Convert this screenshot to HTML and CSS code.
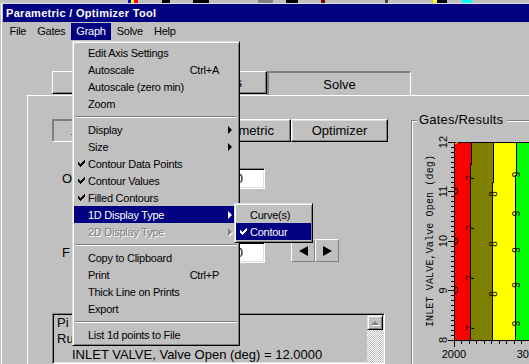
FILE: index.html
```html
<!DOCTYPE html>
<html lang="en">
    <head>
        <meta charset="UTF-8" />
        <title>Parametric / Optimizer Tool</title>
        <link rel="stylesheet" href="styles.css">
    </head>
    <body>
        <div class="window">
            <div class="desk-strip"></div>
            <div class="titlebar">Parametric / Optimizer Tool</div>

            <!-- Menu bar -->
            <div class="menubar">
                <span class="menubar-item">File</span>
                <span class="menubar-item">Gates</span>
                <span class="menubar-item open">Graph</span>
                <span class="menubar-item">Solve</span>
                <span class="menubar-item">Help</span>
            </div>

            <div class="client">
                <!-- Tab strip -->
                <div class="tabs">
                    <div class="tab tab-gates">Gates</div>
                    <div class="tab tab-params">Parameters</div>
                    <div class="tab tab-solve">Solve</div>
                </div>

                <div class="tab-panel">
                    <!-- Left side: mode buttons, fields, results -->
                    <div class="left-col">
                        <div class="mode-row">
                            <div class="btn mode-btn pressed">1D Sweep</div>
                            <div class="btn mode-btn mode-param">Parametric</div>
                            <div class="btn mode-btn">Optimizer</div>
                        </div>

                        <div class="field-row">
                            <span class="field-label">Operating Point</span>
                            <input class="field-input" type="text" value="2000" />
                        </div>

                        <div class="field-row step-row">
                            <span class="field-label">F Value</span>
                            <input class="field-input" type="text" value="2000" />
                            <div class="step-btns">
                                <div class="step-btn"><span class="tri-left"></span></div>
                                <div class="step-btn"><span class="tri-right"></span></div>
                            </div>
                        </div>

                        <div class="results-box">
                            <div class="results-text">
                                <div>Pi Case 1</div>
                                <div>Run 1 of 1</div>
                                <div class="results-indent">INLET VALVE, Valve Open (deg) = 12.0000</div>
                            </div>
                            <div class="scrollbar">
                                <div class="scroll-btn"><span class="tri-up"></span></div>
                                <div class="scroll-track"></div>
                            </div>
                        </div>
                    </div>

                    <!-- Right side: contour plot -->
                    <div class="group-box">
                        <span class="group-label">Gates/Results</span>
                        <svg class="plot" width="158" height="237" viewBox="412 127 158 237">
                            <g shape-rendering="crispEdges">
                                <rect x="455" y="143" width="16" height="197" fill="#ff0000"/>
                                <rect x="471" y="143" width="22" height="197" fill="#808000"/>
                                <rect x="493" y="143" width="23" height="197" fill="#ffff00"/>
                                <rect x="516" y="143" width="54" height="197" fill="#00ff00"/>
                            </g>
                            <g fill="none" stroke="#000" shape-rendering="crispEdges">
                                <!-- contour boundaries -->
                                <path d="M471.5 142V164H470.5V340M493.5 142V182H492.5V340M516.5 142V175H515.5V340"/>
                                <!-- axes -->
                                <path d="M454.5 142V347M454 142.5H570M448 340.5H570"/>
                                <!-- y ticks -->
                                <path d="M448 142.5h6M448 191.5h6M448 241.5h6M448 290.5h6"/>
                                <path d="M451 147.5h3M451 152.5h3M451 157.5h3M451 162.5h3M451 167.5h3M451 172.5h3M451 177.5h3M451 182.5h3M451 187.5h3M451 196.5h3M451 201.5h3M451 206.5h3M451 211.5h3M451 216.5h3M451 221.5h3M451 226.5h3M451 231.5h3M451 236.5h3M451 246.5h3M451 251.5h3M451 256.5h3M451 261.5h3M451 266.5h3M451 271.5h3M451 276.5h3M451 281.5h3M451 286.5h3M451 295.5h3M451 300.5h3M451 305.5h3M451 310.5h3M451 315.5h3M451 320.5h3M451 325.5h3M451 330.5h3M451 335.5h3"/>
                                <!-- x ticks -->
                                <path d="M461.5 341v3M469.5 341v3M476.5 341v3M484.5 341v3M491.5 341v3M499.5 341v3M506.5 341v3M514.5 341v3M521.5 341v3M529.5 341v6M536.5 341v3M544.5 341v3M551.5 341v3M559.5 341v3M566.5 341v3"/>
                            </g>
                            <path d="M455 144l3 -2" stroke="#ffff00" fill="none"/>
                            <path d="M455 188a3 3 0 0 1 0 6M455 238a3 3 0 0 1 0 6M455 287a3 3 0 0 1 0 6" stroke="#000" fill="none"/>

                            <g font-family="Liberation Sans, Arial, sans-serif" font-size="11" text-anchor="middle">
                                <text transform="translate(446.5 142) rotate(-90)">12</text>
                                <text transform="translate(446.5 191.5) rotate(-90)">11</text>
                                <text transform="translate(446.5 241) rotate(-90)">10</text>
                                <text transform="translate(446.5 290.5) rotate(-90)">9</text>
                                <text transform="translate(446.5 340) rotate(-90)">8</text>
                                <text x="454" y="357.5">2000</text>
                                <text x="529" y="357.5">3000</text>
                            </g>
                            <text font-family="Liberation Mono, monospace" font-size="10" letter-spacing="0.15" text-anchor="middle" transform="translate(432.5 241) rotate(-90)">INLET VALVE,Valve Open (deg)</text>

                            <!-- contour level labels -->
                            <g font-family="Liberation Sans, Arial, sans-serif" font-size="10" text-anchor="middle">
                                <text transform="translate(474 178) rotate(-90)">7</text>
                                <text transform="translate(474 228) rotate(-90)">7</text>
                                <text transform="translate(474 278) rotate(-90)">7</text>
                                <text transform="translate(474 328) rotate(-90)">7</text>
                                <text transform="translate(496.5 194) rotate(-90)">8</text>
                                <text transform="translate(496.5 244) rotate(-90)">8</text>
                                <text transform="translate(496.5 294) rotate(-90)">8</text>
                                <text transform="translate(519.5 174.5) rotate(-90)">9</text>
                                <text transform="translate(519.5 213.5) rotate(-90)">9</text>
                                <text transform="translate(519.5 250) rotate(-90)">9</text>
                                <text transform="translate(519.5 285) rotate(-90)">9</text>
                                <text transform="translate(519.5 323.5) rotate(-90)">9</text>
                            </g>
                        </svg>
                    </div>
                </div>
            </div>

            <!-- Graph drop-down menu -->
            <div class="menu graph-menu">
                <div class="menu-item"><span class="check"></span><span class="menu-label">Edit Axis Settings</span></div>
                <div class="menu-item"><span class="check"></span><span class="menu-label">Autoscale</span><span class="shortcut">Ctrl+A</span></div>
                <div class="menu-item"><span class="check"></span><span class="menu-label">Autoscale (zero min)</span></div>
                <div class="menu-item"><span class="check"></span><span class="menu-label">Zoom</span></div>
                <div class="menu-sep"></div>
                <div class="menu-item"><span class="check"></span><span class="menu-label">Display</span><span class="arrow"></span></div>
                <div class="menu-item"><span class="check"></span><span class="menu-label">Size</span><span class="arrow"></span></div>
                <div class="menu-item"><span class="check"><svg class="check-icon" viewBox="0 0 7 7"><path d="M0 2h1v3h-1zM1 3h1v3h-1zM2 4h1v3h-1zM3 3h1v3h-1zM4 2h1v3h-1zM5 1h1v3h-1zM6 0h1v3h-1z"/></svg></span><span class="menu-label">Contour Data Points</span></div>
                <div class="menu-item"><span class="check"><svg class="check-icon" viewBox="0 0 7 7"><path d="M0 2h1v3h-1zM1 3h1v3h-1zM2 4h1v3h-1zM3 3h1v3h-1zM4 2h1v3h-1zM5 1h1v3h-1zM6 0h1v3h-1z"/></svg></span><span class="menu-label">Contour Values</span></div>
                <div class="menu-item"><span class="check"><svg class="check-icon" viewBox="0 0 7 7"><path d="M0 2h1v3h-1zM1 3h1v3h-1zM2 4h1v3h-1zM3 3h1v3h-1zM4 2h1v3h-1zM5 1h1v3h-1zM6 0h1v3h-1z"/></svg></span><span class="menu-label">Filled Contours</span></div>
                <div class="menu-item selected"><span class="check"></span><span class="menu-label">1D Display Type</span><span class="arrow"></span></div>
                <div class="menu-item disabled"><span class="check"></span><span class="menu-label">2D Display Type</span><span class="arrow"></span></div>
                <div class="menu-sep"></div>
                <div class="menu-item"><span class="check"></span><span class="menu-label">Copy to Clipboard</span></div>
                <div class="menu-item"><span class="check"></span><span class="menu-label">Print</span><span class="shortcut">Ctrl+P</span></div>
                <div class="menu-item"><span class="check"></span><span class="menu-label">Thick Line on Prints</span></div>
                <div class="menu-item"><span class="check"></span><span class="menu-label">Export</span></div>
                <div class="menu-sep"></div>
                <div class="menu-item"><span class="check"></span><span class="menu-label">List 1d points to File</span></div>
            </div>

            <!-- 1D Display Type submenu -->
            <div class="menu sub-menu">
                <div class="menu-item"><span class="check"></span><span class="menu-label">Curve(s)</span></div>
                <div class="menu-item selected"><span class="check"><svg class="check-icon" viewBox="0 0 7 7"><path d="M0 2h1v3h-1zM1 3h1v3h-1zM2 4h1v3h-1zM3 3h1v3h-1zM4 2h1v3h-1zM5 1h1v3h-1zM6 0h1v3h-1z"/></svg></span><span class="menu-label">Contour</span></div>
            </div>
        </div>
    </body>
</html>
```

FILE: styles.css
```css
/* --- Basic Reset --- */
* {
  margin: 0;
  padding: 0;
  box-sizing: border-box;
}

body {
  background-color: #c0c0c0;
  font-family: "Liberation Sans", Arial, sans-serif;
  font-size: 11px;
  color: #000;
}

/* --- Window frame --- */
.window {
  position: relative;
  width: 529px;
  height: 364px;
  overflow: hidden;
  padding-left: 3px;
  background-color: #c0c0c0;
  box-shadow: inset 1px 0 #c0c0c0, inset 2px 0 #fff;
}

/* bits of the window behind */
.desk-strip {
  height: 4px;
  margin-left: -3px;
  border-bottom: 1px solid #dfdfdf;
  background: linear-gradient(to right,
    #c0c0c0 128px, #0000ff 128px 131px, #ffff00 131px 134px, #ff0000 134px 138px,
    #c0c0c0 138px 162px, #000 162px 170px, #c0c0c0 170px 193px, #000 193px 209px,
    #c0c0c0 209px 258px, #808080 258px 273px, #c0c0c0 273px 286px, #000 286px 298px,
    #c0c0c0 298px 321px, #800000 321px 325px, #c0c0c0 325px 385px, #404040 385px 388px,
    #c0c0c0 388px 433px, #ffff00 433px 437px, #000 437px 447px, #c0c0c0 447px 462px,
    #00ffff 462px 472px, #c0c0c0 472px);
}

.titlebar {
  height: 18px;
  line-height: 18px;
  padding-left: 3px;
  background-color: #000080;
  color: #fff;
  font-weight: bold;
  letter-spacing: 0.3px;
}

/* --- Menu bar --- */
.menubar {
  display: flex;
  height: 18px;
  padding: 1px 0 0 1px;
}

.menubar-item {
  padding: 0 5.5px;
  line-height: 17px;
  letter-spacing: -0.25px;
}

.menubar-item.open {
  background-color: #000080;
  color: #fff;
}

/* --- Tabs --- */
.client {
  padding-top: 31px;
}

.tabs {
  display: flex;
  align-items: flex-start;
  height: 24px;
  margin-left: 49px;
}

.tab {
  height: 23px;
  display: flex;
  align-items: center;
  justify-content: center;
  font-size: 13px;
  border: 1px solid;
  border-color: #fff #000 #000 #fff;
  box-shadow: inset -1px -1px #808080;
}

.tab-gates {
  width: 98px;
}

.tab-params {
  width: 117px;
}

.tab-solve {
  width: 144px;
  height: 24px;
  border-width: 2px 1px 0 2px;
  border-color: #808080 #fff transparent #808080;
  box-shadow: none;
}

.tab-panel {
  display: flex;
  width: 545px;
  height: 269px;
  margin-left: 24px;
  border-top: 1px solid #fff;
  border-left: 1px solid #fff;
}

/* --- Left column --- */
.left-col {
  width: 383px;
  flex-shrink: 0;
  padding-left: 24px;
  display: flex;
  flex-direction: column;
  align-items: flex-start;
}

.mode-row {
  display: flex;
  margin-top: 23px;
}

.btn {
  height: 23px;
  display: flex;
  align-items: center;
  justify-content: center;
  font-size: 13px;
  border: 1px solid;
  border-color: #fff #000 #000 #fff;
  box-shadow: inset -1px -1px #808080, inset 1px 1px #dfdfdf;
}

.btn.pressed {
  border-color: #808080 #fff #fff #808080;
  box-shadow: inset 1px 1px #808080;
}

.mode-btn {
  width: 97px;
}

.mode-param {
  margin-left: 45px;
}

.field-row {
  display: flex;
  align-items: center;
  margin-top: 26px;
}

.field-label {
  width: 158px;
  padding-left: 10px;
  font-size: 13px;
  line-height: 21px;
  white-space: nowrap;
  overflow: hidden;
}

.field-input {
  width: 55px;
  height: 21px;
  padding: 0 3px;
  font-family: "Liberation Sans", Arial, sans-serif;
  font-size: 13px;
  color: #000;
  background-color: #fff;
  border: 1px solid;
  border-color: #808080 #fff #fff #808080;
  box-shadow: inset 1px 1px #000, inset -1px -1px #dfdfdf;
  outline: none;
}

.step-row {
  align-items: flex-start;
  margin-top: 50px;
}

.step-row .field-label,
.step-row .field-input {
  margin-top: 3px;
}

.step-btns {
  display: flex;
  margin-left: 26px;
}

.step-btn {
  width: 24px;
  height: 23px;
  display: flex;
  align-items: center;
  justify-content: center;
  border: 1px solid;
  border-color: #fff #808080 #808080 #fff;
}

.tri-left {
  border-top: 5px solid transparent;
  border-bottom: 5px solid transparent;
  border-right: 9px solid #000;
}

.tri-right {
  border-top: 5px solid transparent;
  border-bottom: 5px solid transparent;
  border-left: 9px solid #000;
}

/* --- Results text box --- */
.results-box {
  display: flex;
  width: 333px;
  height: 60px;
  margin-top: 50px;
  border: 1px solid;
  border-color: #808080 #fff #fff #808080;
  box-shadow: inset 1px 1px #000, inset -1px -1px #dfdfdf;
}

.results-text {
  flex: 1;
  padding: 1px 0 0 4px;
  font-size: 13px;
  line-height: 16px;
  white-space: nowrap;
}

.results-indent {
  padding-left: 15px;
}

.scrollbar {
  width: 16px;
  margin: 1px 1px 0 0;
  display: flex;
  flex-direction: column;
}

.scroll-btn {
  height: 15px;
  display: flex;
  align-items: center;
  justify-content: center;
  background-color: #c0c0c0;
  border: 1px solid;
  border-color: #dfdfdf #000 #000 #dfdfdf;
  box-shadow: inset 1px 1px #fff, inset -1px -1px #808080;
}

.tri-up {
  border-left: 4px solid transparent;
  border-right: 4px solid transparent;
  border-bottom: 4px solid #808080;
  filter: drop-shadow(1px 1px 0 #fff);
}

.scroll-track {
  flex: 1;
  background: repeating-conic-gradient(#fff 0 25%, #c0c0c0 0 50%) 0 0 / 2px 2px;
}

/* --- Gates/Results group --- */
.group-box {
  width: 160px;
  flex-shrink: 0;
  margin-top: 24px;
  border-top: 1px solid #808080;
  border-left: 1px solid #808080;
  box-shadow: inset 1px 1px #fff;
  display: flex;
  flex-direction: column;
  align-items: flex-start;
}

.group-label {
  margin: -8px 0 0 5px;
  padding: 0 4px 0 2px;
  font-size: 13px;
  line-height: 14px;
  letter-spacing: 0.2px;
  background-color: #c0c0c0;
}

.plot {
  display: block;
}

/* --- Drop-down menus --- */
.menu {
  position: absolute;
  padding: 2px 1px;
  background-color: #c0c0c0;
  border: 1px solid;
  border-color: #dfdfdf #000 #000 #dfdfdf;
  box-shadow: inset 1px 1px #fff, inset -1px -1px #808080;
  letter-spacing: -0.25px;
}

.graph-menu {
  left: 72px;
  top: 41px;
  width: 168px;
}

.sub-menu {
  left: 234px;
  top: 203px;
  width: 79px;
}

.menu-item {
  display: flex;
  align-items: center;
  height: 17px;
  padding-right: 5px;
  white-space: nowrap;
}

.menu-item.selected {
  background-color: #000080;
  color: #fff;
}

.menu-item.disabled {
  color: #808080;
  text-shadow: 1px 1px 0 #fff;
}

.check {
  width: 14px;
  flex-shrink: 0;
  display: flex;
  justify-content: center;
}

.check-icon {
  width: 7px;
  height: 7px;
  fill: currentColor;
  shape-rendering: crispEdges;
}

.menu-label {
  flex: 1;
}

.shortcut {
  margin-right: 14px;
}

.arrow {
  border-top: 4px solid transparent;
  border-bottom: 4px solid transparent;
  border-left: 4px solid currentColor;
  margin-right: 1px;
}

.menu-item.disabled .arrow {
  filter: drop-shadow(1px 1px 0 #fff);
}

.menu-sep {
  height: 9px;
  padding-top: 4px;
}

.menu-sep::before {
  content: "";
  display: block;
  margin: 0 1px;
  border-top: 1px solid #808080;
  border-bottom: 1px solid #fff;
}
```
